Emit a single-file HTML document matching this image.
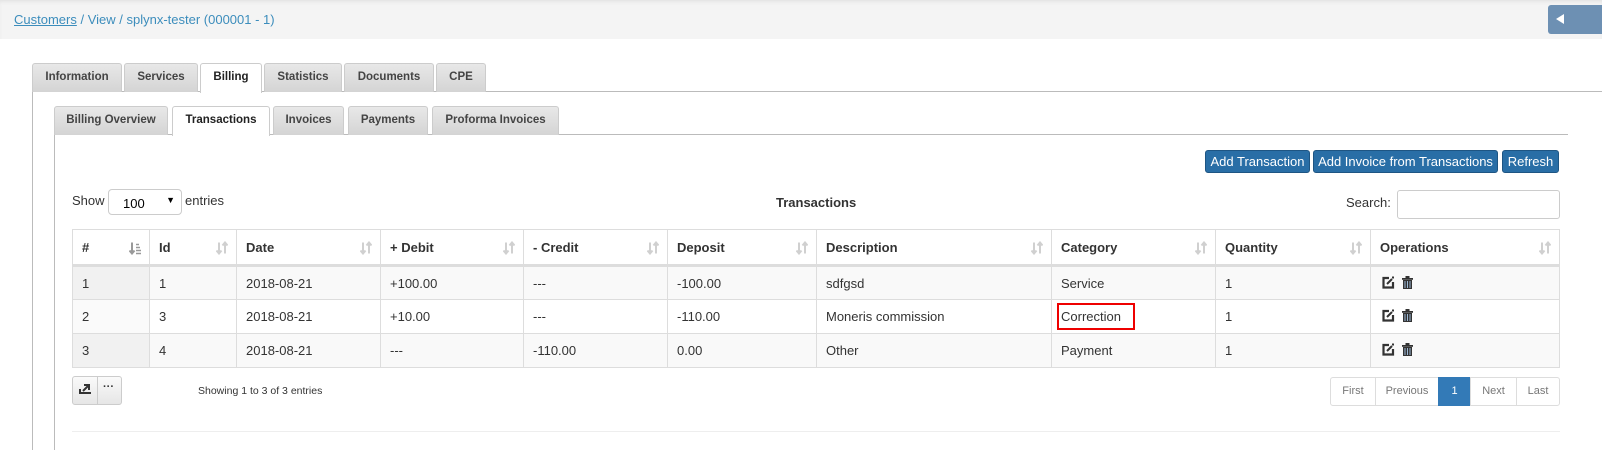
<!DOCTYPE html>
<html><head><meta charset="utf-8"><style>
*{box-sizing:border-box}
html,body{margin:0;width:1602px;height:450px;overflow:hidden}
body{background:#fff;font-family:"Liberation Sans",Arial,sans-serif;font-size:13px;color:#333;position:relative}
.abs{position:absolute}
.hdr{left:0;top:0;width:1602px;height:39px;background:#f4f4f4;box-shadow:inset 0 3px 4px -2px #ddd}
.bc{left:14px;top:12px;color:#3c8dbc;font-size:13px}
.bc u{color:#3c8dbc}
.tab{position:absolute;height:29px;border:1px solid #ccc;border-bottom:none;border-radius:3px 3px 0 0;background:linear-gradient(#e8e8e8,#d4d4d4);font-weight:bold;font-size:11.5px;color:#444;text-align:center;line-height:27px}
.tab.act{background:#fff;color:#222;height:30px}
.btn{position:absolute;top:150px;height:23px;background:#296ea6;border:1px solid #1e5583;border-radius:3px;color:#fff;font-size:13px;line-height:21px;text-align:center}
table{position:absolute;left:72px;top:229px;border-collapse:collapse;width:1488px;font-size:13px}
td,th{border:1px solid #ddd;padding:0 9px;text-align:left;height:34px;position:relative}
th{height:36px;font-weight:bold;border-bottom:3px solid #ddd;color:#333}
tbody tr:nth-child(odd){background:#f9f9f9}
td.s{background:#f1f1f1}
tbody tr:nth-child(even) td.s{background:#fafafa}
.sort{position:absolute;right:8px;top:11px;width:12px;height:14px}
.pg{position:absolute;top:377px;height:29px;border:1px solid #ddd;color:#777;font-size:11px;line-height:27px;text-align:center;background:#fff}
.ic{position:absolute;left:10px;top:9px}
</style></head><body>
<div class="abs hdr"></div>
<div class="abs bc"><u>Customers</u> / View / splynx-tester (000001 - 1)</div>
<div class="abs" style="left:1548px;top:5px;width:54px;height:29px;background:#6d90b3;border-radius:3px 0 0 3px"></div>
<div class="abs" style="left:1556px;top:14px;width:0;height:0;border-right:8px solid #fff;border-top:5px solid transparent;border-bottom:5px solid transparent"></div>

<div class="abs" style="left:32px;top:91px;width:1570px;border-top:1px solid #bbb;height:359px;border-left:1px solid #bbb"></div>
<div class="tab" style="left:32px;top:63px;width:90px">Information</div>
<div class="tab" style="left:124px;top:63px;width:74px">Services</div>
<div class="tab act" style="left:200px;top:63px;width:62px">Billing</div>
<div class="tab" style="left:264px;top:63px;width:78px">Statistics</div>
<div class="tab" style="left:344px;top:63px;width:90px">Documents</div>
<div class="tab" style="left:436px;top:63px;width:50px">CPE</div>

<div class="abs" style="left:54px;top:134px;width:1514px;border-top:1px solid #bbb;height:316px;border-left:1px solid #bbb"></div>
<div class="tab" style="left:54px;top:106px;width:114px">Billing Overview</div>
<div class="tab act" style="left:172px;top:106px;width:98px">Transactions</div>
<div class="tab" style="left:273px;top:106px;width:71px">Invoices</div>
<div class="tab" style="left:348px;top:106px;width:80px">Payments</div>
<div class="tab" style="left:432px;top:106px;width:127px">Proforma Invoices</div>

<div class="btn" style="left:1205px;width:105px">Add Transaction</div>
<div class="btn" style="left:1313px;width:185px">Add Invoice from Transactions</div>
<div class="btn" style="left:1502px;width:57px">Refresh</div>

<div class="abs" style="left:72px;top:193px">Show</div>
<div class="abs" style="left:108px;top:189px;width:74px;height:26px;border:1px solid #ccc;border-radius:4px;padding:6px 0 0 14px;color:#000">100<span style="position:absolute;right:6px;top:5px;font-size:9px">▼</span></div>
<div class="abs" style="left:185px;top:193px">entries</div>
<div class="abs" style="left:776px;top:195px;font-weight:bold">Transactions</div>
<div class="abs" style="left:1346px;top:195px">Search:</div>
<div class="abs" style="left:1397px;top:190px;width:163px;height:29px;border:1px solid #ccc;border-radius:3px"></div>

<svg width="0" height="0" style="position:absolute"><defs>
<g id="so"><path d="M3 1v11M0.5 9l2.5 3 2.5-3M9 12V1M6.5 4L9 1l2.5 3" stroke="#d0d0d0" stroke-width="2" fill="none"/></g>
<g id="ed"><path d="M8 2H2.5v9.5H12V6" stroke="#333" stroke-width="2.2" fill="none"/><path d="M6 8l5-5" stroke="#333" stroke-width="2"/><rect x="11" y="0.5" width="2" height="2" fill="#333"/></g>
<g id="tr"><rect x="1" y="2" width="11" height="1.8" fill="#333"/><rect x="4.5" y="0" width="4" height="2" fill="#333"/><rect x="2" y="4" width="9" height="9" fill="#333"/><path d="M4 5v7M6.5 5v7M9 5v7" stroke="#9bb7d4" stroke-width="1"/></g>
</defs></svg>

<table>
<colgroup><col style="width:77px"><col style="width:87px"><col style="width:144px"><col style="width:143px"><col style="width:144px"><col style="width:149px"><col style="width:235px"><col style="width:164px"><col style="width:155px"><col></colgroup>
<thead><tr>
<th>#<svg class="sort" viewBox="0 0 12 13"><path d="M3 1v11M0.5 9l2.5 3 2.5-3" stroke="#999" stroke-width="2" fill="none"/><path d="M7 3h3M7 6h4M7 9h5M7 12h5" stroke="#999" stroke-width="1.5"/></svg></th>
<th>Id<svg class="sort" viewBox="0 0 12 13"><use href="#so"/></svg></th>
<th>Date<svg class="sort" viewBox="0 0 12 13"><use href="#so"/></svg></th>
<th>+ Debit<svg class="sort" viewBox="0 0 12 13"><use href="#so"/></svg></th>
<th>- Credit<svg class="sort" viewBox="0 0 12 13"><use href="#so"/></svg></th>
<th>Deposit<svg class="sort" viewBox="0 0 12 13"><use href="#so"/></svg></th>
<th>Description<svg class="sort" viewBox="0 0 12 13"><use href="#so"/></svg></th>
<th>Category<svg class="sort" viewBox="0 0 12 13"><use href="#so"/></svg></th>
<th>Quantity<svg class="sort" viewBox="0 0 12 13"><use href="#so"/></svg></th>
<th>Operations<svg class="sort" viewBox="0 0 12 13"><use href="#so"/></svg></th></tr></thead>
<tbody>
<tr><td class="s">1</td><td>1</td><td>2018-08-21</td><td>+100.00</td><td>---</td><td>-100.00</td><td>sdfgsd</td><td>Service</td><td>1</td><td><svg class="ic" width="34" height="14"><use href="#ed"/><use href="#tr" x="20"/></svg></td></tr>
<tr><td class="s">2</td><td>3</td><td>2018-08-21</td><td>+10.00</td><td>---</td><td>-110.00</td><td>Moneris commission</td><td><span style="position:absolute;left:5px;top:3px;width:78px;height:27px;border:2px solid #e00"></span>Correction</td><td>1</td><td><svg class="ic" width="34" height="14"><use href="#ed"/><use href="#tr" x="20"/></svg></td></tr>
<tr><td class="s">3</td><td>4</td><td>2018-08-21</td><td>---</td><td>-110.00</td><td>0.00</td><td>Other</td><td>Payment</td><td>1</td><td><svg class="ic" width="34" height="14"><use href="#ed"/><use href="#tr" x="20"/></svg></td></tr>
</tbody></table>

<div class="abs" style="left:72px;top:376px;width:50px;height:29px;border:1px solid #ccc;border-radius:3px;background:linear-gradient(#fafafa,#e6e6e6)"></div>
<div class="abs" style="left:97px;top:376px;height:29px;border-left:1px solid #ccc"></div>
<svg class="abs" style="left:79px;top:383px" width="12" height="13"><path d="M4 8l6-6M5 2h5v5" stroke="#333" stroke-width="2" fill="none"/><rect x="0" y="9" width="12" height="2" fill="#333"/><rect x="0" y="6" width="2" height="4" fill="#333"/></svg>
<div class="abs" style="left:103px;top:381px;font-size:11px;font-weight:bold">···</div>
<div class="abs" style="left:198px;top:385px;font-size:10.5px">Showing 1 to 3 of 3 entries</div>

<div class="pg" style="left:1330px;width:46px;border-radius:3px 0 0 3px">First</div>
<div class="pg" style="left:1375px;width:64px">Previous</div>
<div class="pg" style="left:1438px;width:33px;background:#337ab7;border-color:#337ab7;color:#fff">1</div>
<div class="pg" style="left:1470px;width:47px">Next</div>
<div class="pg" style="left:1516px;width:44px;border-radius:0 3px 3px 0">Last</div>

<div class="abs" style="left:72px;top:431px;width:1488px;border-top:1px solid #eee"></div>
</body></html>
